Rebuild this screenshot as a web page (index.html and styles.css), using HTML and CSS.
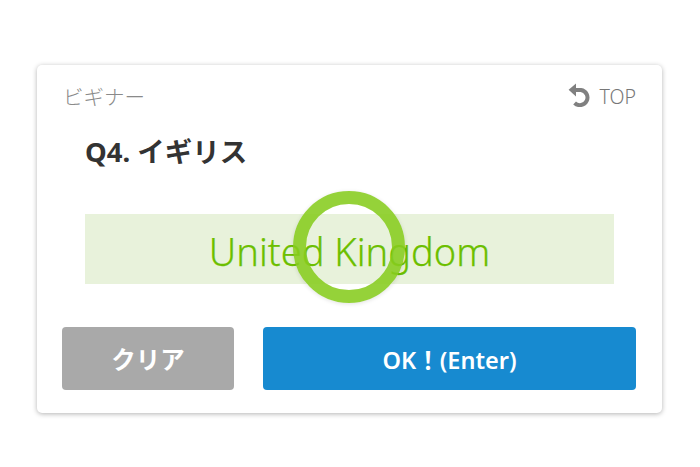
FILE: index.html
```html
<!DOCTYPE html>
<html lang="ja">
<head>
<meta charset="utf-8">
<title>Quiz</title>
<link rel="stylesheet" href="styles.css">
</head>
<body>
<main class="card">
  <header class="top">
    <span class="level">ビギナー</span>
    <a class="toplink">
      <svg class="undo" viewBox="0 0 24 24" width="24" height="24" aria-hidden="true">
        <path d="M5 7 H13 A7.6 7.6 0 1 1 6.6 20" fill="none" stroke="#808080" stroke-width="4"/>
        <path d="M0.6 6.8 L8 0.4 V13.4 Z" fill="#808080"/>
      </svg>
      <span>TOP</span>
    </a>
  </header>
  <h1 class="question">Q4. イギリス</h1>
  <div class="answer">United Kingdom</div>
  <div class="ring"></div>
  <div class="actions">
    <button class="btn clear">クリア</button>
    <button class="btn ok">OK！(Enter)</button>
  </div>
</main>
</body>
</html>
```
FILE: styles.css
```css
* { box-sizing: border-box; }
html, body { margin: 0; height: 467px; background: #fff; overflow: hidden; }
body {
  padding: 65px 38px 54px 37px;
  font-family: "Noto Sans", "Noto Sans CJK JP", sans-serif;
}
.card {
  position: relative;
  width: 625px;
  height: 348px;
  background: #fff;
  border-radius: 5px;
  box-shadow: 0 1px 5px rgba(0, 0, 0, 0.3);
  padding: 16px 26px 23px 25px;
  display: flex;
  flex-direction: column;
}
.top {
  display: flex;
  justify-content: space-between;
  align-items: center;
  height: 30px;
}
.level { font-size: 20.5px; font-weight: 300; color: #8a8a8a; margin-left: 1px; }
.toplink { display: flex; align-items: center; gap: 8px; font-size: 19.5px; font-weight: 300; color: #777; }
.undo { display: block; margin-top: -2px; }
.question {
  margin: 23px 0 0 23px;
  font-size: 27.5px;
  line-height: 36px;
  font-weight: 700;
  color: #333;
}
.answer {
  margin: 44px 22px 0 23px;
  height: 70px;
  background: #e8f2db;
  color: #6cbf00;
  font-family: "Noto Sans", sans-serif;
  font-size: 38px;
  font-weight: 300;
  -webkit-text-stroke: 0.25px #6cbf00;
  line-height: 75px;
  text-align: center;
}
.ring {
  position: absolute;
  left: 256px;
  top: 126px;
  width: 112px;
  height: 112px;
  border: 13px solid rgba(134, 204, 30, 0.88);
  border-radius: 50%;
  box-shadow: 0 1px 4px rgba(0, 0, 0, 0.12);
}
.actions {
  margin-top: 43px;
  display: flex;
  gap: 29px;
}
.btn {
  height: 63px;
  border: 0;
  border-radius: 4px;
  color: #fff;
  font-family: "Noto Sans", "Noto Sans CJK JP", sans-serif;
  font-size: 24.5px;
  font-weight: 700;
  padding: 0;
}
.clear { width: 172px; background: #a9a9a9; }
.ok { flex: 1; background: #178ad0; font-size: 23.5px; font-weight: 600; }
```
